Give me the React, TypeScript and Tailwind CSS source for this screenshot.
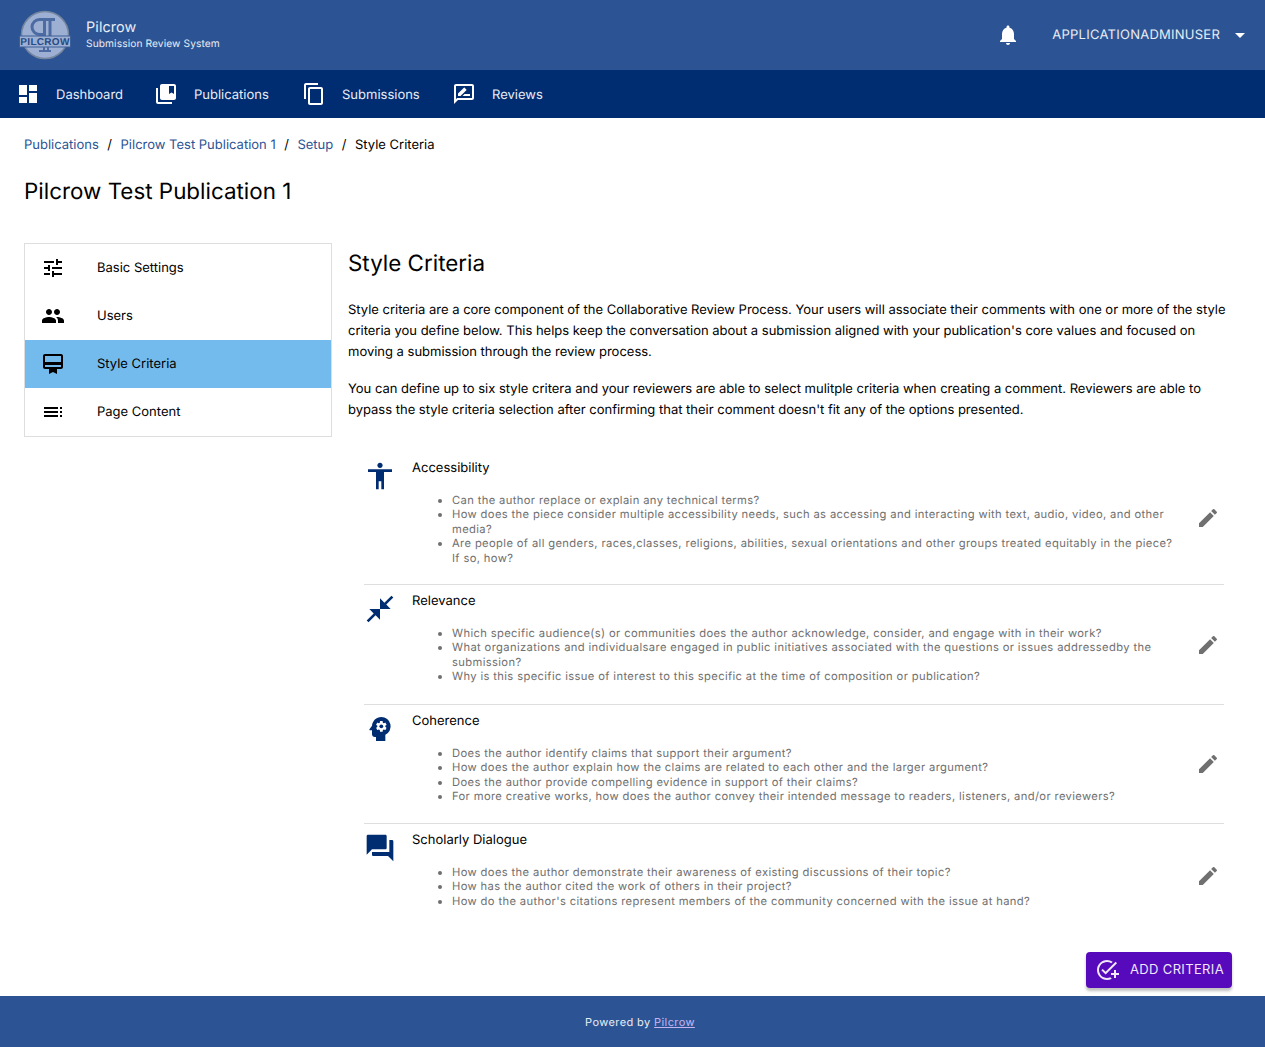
import { ReactNode } from "react";
import {
  MdAccessibility,
  MdAddTask,
  MdArrowDropDown,
  MdCloseFullscreen,
  MdCollectionsBookmark,
  MdDashboard,
  MdEdit,
  MdForum,
  MdNotifications,
  MdOutlineCardMembership,
  MdOutlineContentCopy,
  MdOutlineRateReview,
  MdPeople,
  MdPsychology,
  MdToc,
  MdTune,
} from "react-icons/md";

const Logo = () => (
  <svg width="52" height="50" viewBox="0 0 52 50" className="shrink-0">
    <circle cx="26" cy="25" r="23.5" fill="#9db0d3" stroke="#76869f" strokeWidth="1.5" />
    <path
      d="M36 9.5H20.5a7.5 7.5 0 0 0 0 15h3.5M25.5 10v26M31 10v26"
      fill="none"
      stroke="#4d6ba3"
      strokeWidth="3"
    />
    <rect x="0.5" y="26" width="51" height="11" fill="#9db0d3" stroke="#3f5f98" strokeWidth="1" />
    <text
      x="26"
      y="35"
      textAnchor="middle"
      fontSize="10"
      fontWeight="700"
      letterSpacing="0.3"
      fontFamily="'Liberation Sans', sans-serif"
      fill="#274a85"
    >
      PILCROW
    </text>
    <path d="M24 37h2v3h2v-3h2v3h2v2H20v-2h4z" fill="#4d6ba3" />
  </svg>
);

const navItems = [
  { label: "Dashboard", icon: <MdDashboard size={24} />, w: "w-[138px]" },
  { label: "Publications", icon: <MdCollectionsBookmark size={24} />, w: "w-[148px]" },
  { label: "Submissions", icon: <MdOutlineContentCopy size={24} />, w: "w-[150px]" },
  { label: "Reviews", icon: <MdOutlineRateReview size={24} />, w: "w-[120px]" },
];

const sideItems = [
  { label: "Basic Settings", icon: <MdTune size={24} /> },
  { label: "Users", icon: <MdPeople size={24} /> },
  { label: "Style Criteria", icon: <MdOutlineCardMembership size={24} />, active: true },
  { label: "Page Content", icon: <MdToc size={24} /> },
];

type Criterion = {
  title: string;
  icon: ReactNode;
  height: string;
  bullets: string[];
};

const criteria: Criterion[] = [
  {
    title: "Accessibility",
    icon: <MdAccessibility size={32} />,
    height: "h-[133px]",
    bullets: [
      "Can the author replace or explain any technical terms?",
      "How does the piece consider multiple accessibility needs, such as accessing and interacting with text, audio, video, and other media?",
      "Are people of all genders, races,classes, religions, abilities, sexual orientations and other groups treated equitably in the piece? If so, how?",
    ],
  },
  {
    title: "Relevance",
    icon: <MdCloseFullscreen size={32} />,
    height: "h-[120px]",
    bullets: [
      "Which specific audience(s) or communities does the author acknowledge, consider, and engage with in their work?",
      "What organizations and individualsare engaged in public initiatives associated with the questions or issues addressedby the submission?",
      "Why is this specific issue of interest to this specific at the time of composition or publication?",
    ],
  },
  {
    title: "Coherence",
    icon: <MdPsychology size={32} />,
    height: "h-[119px]",
    bullets: [
      "Does the author identify claims that support their argument?",
      "How does the author explain how the claims are related to each other and the larger argument?",
      "Does the author provide compelling evidence in support of their claims?",
      "For more creative works, how does the author convey their intended message to readers, listeners, and/or reviewers?",
    ],
  },
  {
    title: "Scholarly Dialogue",
    icon: <MdForum size={32} />,
    height: "h-[104px]",
    bullets: [
      "How does the author demonstrate their awareness of existing discussions of their topic?",
      "How has the author cited the work of others in their project?",
      "How do the author's citations represent members of the community concerned with the issue at hand?",
    ],
  },
];

export default function App() {
  return (
    <div className="flex min-h-[1047px] flex-col bg-white font-['Inter',sans-serif] text-black [text-rendering:geometricPrecision]">
      <header className="flex h-[70px] items-center bg-[#2c5494] pl-[19px] pr-[13px] text-white">
        <Logo />
        <div className="ml-[15px] flex flex-col">
          <span className="text-[14.4px] leading-[18px] tracking-[0.1px] text-[#e8edf5]">Pilcrow</span>
          <span className="text-[10.2px] leading-[14px] tracking-[0.1px] text-[#e8edf5]">
            Submission Review System
          </span>
        </div>
        <div className="ml-auto flex items-center">
          <MdNotifications size={24} />
          <span className="ml-[32px] pt-[2px] text-[13px] tracking-[0.25px] text-[#e8edf5]">APPLICATIONADMINUSER</span>
          <MdArrowDropDown size={24} className="ml-[8px]" />
        </div>
      </header>

      <nav className="flex h-[48px] items-center bg-[#002c71] pl-[16px] text-white">
        {navItems.map((item) => (
          <div key={item.label} className={`flex items-center ${item.w}`}>
            {item.icon}
            <span className="ml-[16px] pt-[4px] text-[13px] text-[#e8edf5]">{item.label}</span>
          </div>
        ))}
      </nav>

      <main className="flex-1 px-[24px]">
        <div className="flex h-[53px] items-center pt-[2px] text-[13px]">
          <a className="text-[#2c5494]">Publications</a>
          <span className="mx-[8.5px]">/</span>
          <a className="text-[#2c5494]">Pilcrow Test Publication 1</a>
          <span className="mx-[8.5px]">/</span>
          <a className="text-[#2c5494]">Setup</a>
          <span className="mx-[8.5px]">/</span>
          <span>Style Criteria</span>
        </div>
        <h1 className="mt-[5px] text-[22.4px] leading-[32px]">Pilcrow Test Publication 1</h1>

        <div className="mt-[35px] flex">
          <aside className="h-[194px] w-[308px] shrink-0 border border-[#dedede] bg-white">
            {sideItems.map((item) => (
              <div
                key={item.label}
                className={`flex h-[48px] items-center pl-[16px] ${item.active ? "bg-[#74bbed]" : ""}`}
              >
                <span className="flex w-[24px] justify-center">{item.icon}</span>
                <span className="ml-[32px] pt-[2px] text-[13px]">{item.label}</span>
              </div>
            ))}
          </aside>

          <section className="ml-[16px] flex-1">
            <h2 className="mt-[5px] text-[22.4px] leading-[32px]">Style Criteria</h2>
            <p className="mt-[20px] text-[13px] leading-[21px] tracking-[-0.01px]">
              Style criteria are a core component of the Collaborative Review Process. Your users will associate their
              comments with one or more of the style criteria you define below. This helps keep the conversation about a
              submission aligned with your publication's core values and focused on moving a submission through the
              review process.
            </p>
            <p className="mt-[16px] text-[13px] leading-[21px] tracking-[-0.01px]">
              You can define up to six style critera and your reviewers are able to select mulitple criteria when
              creating a comment. Reviewers are able to bypass the style criteria selection after confirming that their
              comment doesn't fit any of the options presented.
            </p>

            <div className="ml-[16px] mr-[17px] mt-[31px]">
              {criteria.map((c, i) => (
                <div
                  key={c.title}
                  className={`flex ${c.height} ${i < criteria.length - 1 ? "border-b border-[#dedede]" : ""}`}
                >
                  <div className="w-[48px] shrink-0 pt-[8px] text-[#002c71]">{c.icon}</div>
                  <div className="flex-1 pt-[8px]">
                    <div className="text-[13px] leading-[16px]">{c.title}</div>
                    <ul className="mt-[16.5px] list-disc pl-[40px] text-[11.2px] leading-[14.5px] tracking-[0.37px] text-[#6f6f6f]">
                      {c.bullets.map((b) => (
                        <li key={b}>{b}</li>
                      ))}
                    </ul>
                  </div>
                  <div className="flex w-[48px] shrink-0 items-center justify-end pr-[4px] text-[#707070]">
                    <MdEdit size={24} />
                  </div>
                </div>
              ))}
            </div>

            <div className="mt-[24px] flex justify-end pr-[9px]">
              <button className="flex h-[36px] w-[146px] items-center rounded-[4px] bg-[#5709bc] pl-[9px] text-[13px] tracking-[0.35px] text-[#f0e8fa] shadow-[0_3px_3px_rgba(0,0,0,0.25)]">
                <MdAddTask size={24} />
                <span className="ml-[11px]">ADD CRITERIA</span>
              </button>
            </div>
          </section>
        </div>
      </main>

      <footer className="flex h-[51px] items-center justify-center bg-[#2c5494] pl-[15px] pt-[2px] text-[11px] tracking-[0.4px] text-[#e8edf5]">
        <span>
          Powered by <a className="text-[#c6b4f0] underline">Pilcrow</a>
        </span>
      </footer>
    </div>
  );
}
